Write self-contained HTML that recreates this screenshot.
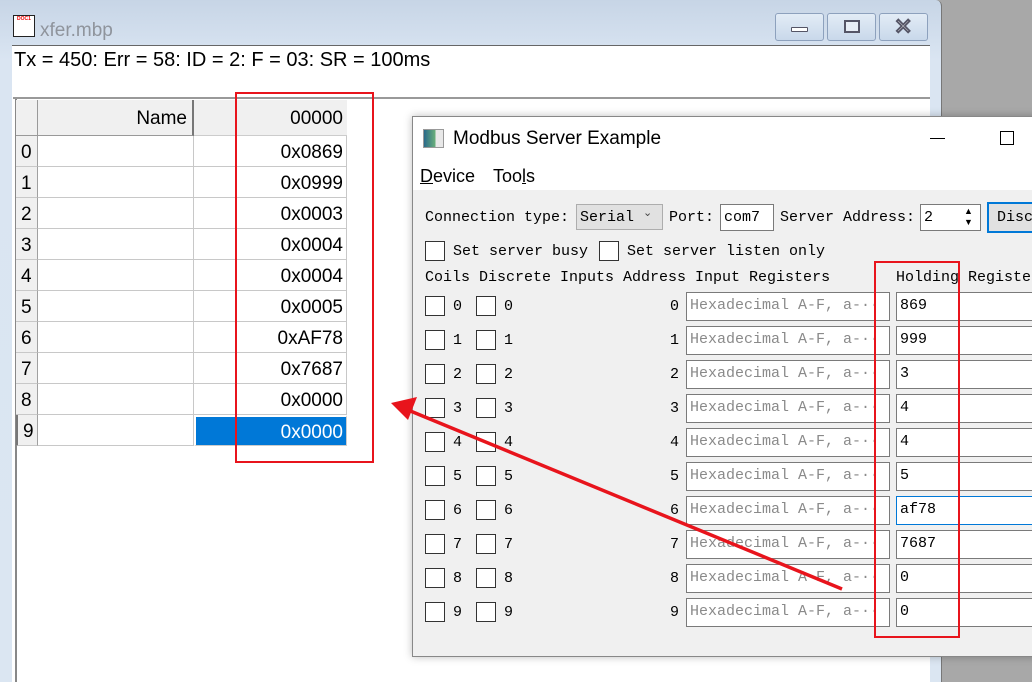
<!DOCTYPE html>
<html><head><meta charset="utf-8"><style>
*{margin:0;padding:0;box-sizing:border-box}
body{width:1032px;height:682px;overflow:hidden;position:relative;background:#a8a8a8;font-family:"Liberation Sans",sans-serif}
.a{position:absolute}
.m{font-family:"Liberation Mono","Noto Sans CJK SC",monospace;font-size:15px;color:#000;white-space:nowrap}
.cb{position:absolute;width:20px;height:20px;border:1px solid #333;background:#fff}
.in{position:absolute;height:29px;border:1px solid #7a7a7a;background:#fff;padding:4px 0 0 3px}
.gc{position:absolute;border-right:1px solid #c8c8c8;border-bottom:1px solid #c8c8c8;background:#fff;font-size:19px;text-align:right;padding:6px 3px 0 0}
.rh{position:absolute;left:16px;width:22px;background:#f0f0f0;border-bottom:1px solid #c8c8c8;border-right:1px solid #a0a0a0;font-size:19px;padding:6px 0 0 5px}
.wb{position:absolute;top:13px;width:49px;height:28px;border:1px solid #8da1bd;border-radius:3px;background:linear-gradient(#e3ecf6,#c9d8ea)}
</style></head><body>
<div class="a" style="left:0;top:0;width:942px;height:682px;background:linear-gradient(#c7d5e6,#dae5f2 60px,#dbe6f2);border-right:1px solid #777;border-top-right-radius:6px"></div>
<div class="a" style="left:13px;top:15px;width:22px;height:22px;border:1px solid #222;background:#fff"><div style="font-size:5px;color:#e00;font-weight:bold;text-align:center;line-height:6px">DOC1</div></div>
<div class="a" style="left:40px;top:20px;font-size:19px;color:#8f949c">xfer.mbp</div>
<div class="wb" style="left:775px"><div class="a" style="left:15px;top:13px;width:17px;height:5px;border:1px solid #556;background:#fff;border-radius:1px"></div></div>
<div class="wb" style="left:827px"><div class="a" style="left:16px;top:6px;width:16px;height:13px;border:2px solid #556;background:#e8eef6"></div></div>
<div class="wb" style="left:879px"><div class="a" style="left:14px;top:0;font-size:22px;font-weight:bold;color:#fff;-webkit-text-stroke:1px #556">✕</div></div>
<div class="a" style="left:12px;top:45px;width:918px;height:637px;background:#fff;border-top:1px solid #666"></div>
<div class="a" style="left:14px;top:49px;font-size:20px;color:#000">Tx = 450: Err = 58: ID = 2: F = 03: SR = 100ms</div>
<div class="a" style="left:13px;top:97px;width:917px;height:2px;background:#999"></div>
<div class="a" style="left:15px;top:99px;width:2px;height:583px;background:#888"></div>
<div class="a" style="left:16px;top:100px;width:22px;height:36px;background:#f0f0f0;border-right:1px solid #999;border-bottom:1px solid #999"></div>
<div class="a" style="left:38px;top:100px;width:156px;height:36px;background:#f0f0f0;border-right:2px solid #777;border-bottom:1px solid #999;font-size:19px;text-align:right;padding:8px 5px 0 0">Name</div>
<div class="a" style="left:194px;top:100px;width:153px;height:36px;background:#f0f0f0;border-bottom:1px solid #ccc;font-size:19px;text-align:right;padding:8px 4px 0 0">00000</div>
<div class="rh" style="top:136px;height:31px">0</div><div class="gc" style="left:38px;top:136px;width:156px;height:31px"></div><div class="gc" style="left:194px;top:136px;width:153px;height:31px">0x0869</div>
<div class="rh" style="top:167px;height:31px">1</div><div class="gc" style="left:38px;top:167px;width:156px;height:31px"></div><div class="gc" style="left:194px;top:167px;width:153px;height:31px">0x0999</div>
<div class="rh" style="top:198px;height:31px">2</div><div class="gc" style="left:38px;top:198px;width:156px;height:31px"></div><div class="gc" style="left:194px;top:198px;width:153px;height:31px">0x0003</div>
<div class="rh" style="top:229px;height:31px">3</div><div class="gc" style="left:38px;top:229px;width:156px;height:31px"></div><div class="gc" style="left:194px;top:229px;width:153px;height:31px">0x0004</div>
<div class="rh" style="top:260px;height:31px">4</div><div class="gc" style="left:38px;top:260px;width:156px;height:31px"></div><div class="gc" style="left:194px;top:260px;width:153px;height:31px">0x0004</div>
<div class="rh" style="top:291px;height:31px">5</div><div class="gc" style="left:38px;top:291px;width:156px;height:31px"></div><div class="gc" style="left:194px;top:291px;width:153px;height:31px">0x0005</div>
<div class="rh" style="top:322px;height:31px">6</div><div class="gc" style="left:38px;top:322px;width:156px;height:31px"></div><div class="gc" style="left:194px;top:322px;width:153px;height:31px">0xAF78</div>
<div class="rh" style="top:353px;height:31px">7</div><div class="gc" style="left:38px;top:353px;width:156px;height:31px"></div><div class="gc" style="left:194px;top:353px;width:153px;height:31px">0x7687</div>
<div class="rh" style="top:384px;height:31px">8</div><div class="gc" style="left:38px;top:384px;width:156px;height:31px"></div><div class="gc" style="left:194px;top:384px;width:153px;height:31px">0x0000</div>
<div class="rh" style="top:415px;height:31px;border-left:2px solid #777">9</div><div class="gc" style="left:38px;top:415px;width:156px;height:31px"></div><div class="gc" style="left:194px;top:415px;width:153px;height:31px;background:#0078d7;color:#fff;border:1px solid #ccc;border-left:2px solid #fff;border-top:2px solid #fff;padding-top:5px">0x0000</div>
<div class="a" style="left:235px;top:92px;width:139px;height:371px;border:2px solid #e8141c"></div>

<div class="a" style="left:412px;top:116px;width:630px;height:541px;background:#f0f0f0;border:1px solid #888;box-shadow:0 0 8px rgba(0,0,0,.25)"></div>
<div class="a" style="left:413px;top:117px;width:619px;height:73px;background:#fff"></div>
<div class="a" style="left:423px;top:129px;width:21px;height:19px;border:1px solid #999;background:linear-gradient(90deg,#2a6a8a,#6ab07a 60%,#e8e8e8 60%)"></div>
<div class="a" style="left:453px;top:128px;font-size:19px;color:#000">Modbus Server Example</div>
<div class="a" style="left:930px;top:138px;width:15px;height:1px;background:#000"></div>
<div class="a" style="left:1000px;top:131px;width:14px;height:14px;border:1px solid #000"></div>
<div class="a" style="left:420px;top:166px;font-size:18px"><u>D</u>evice</div>
<div class="a" style="left:493px;top:166px;font-size:18px">Too<u>l</u>s</div>

<div class="a m" style="left:425px;top:209px">Connection type:</div>
<div class="a" style="left:576px;top:204px;width:87px;height:26px;background:#e1e1e1;border:1px solid #adadad"></div>
<div class="a m" style="left:580px;top:209px">Serial</div>
<div class="a" style="left:643px;top:206px;font-size:11px;color:#444">&#8964;</div>
<div class="a m" style="left:669px;top:209px">Port:</div>
<div class="in m" style="left:720px;top:204px;width:54px;height:27px;padding-top:4px">com7</div>
<div class="a m" style="left:780px;top:209px">Server Address:</div>
<div class="in m" style="left:920px;top:204px;width:61px;height:27px;padding-top:4px">2</div>
<div class="a" style="left:964px;top:206px;font-size:9px;line-height:11px;color:#000">▲<br>▼</div>
<div class="a" style="left:987px;top:202px;width:60px;height:31px;border:2px solid #0078d7;background:#e1e1e1"></div>
<div class="a m" style="left:997px;top:209px">Disc</div>

<div class="cb" style="left:425px;top:241px"></div><div class="a m" style="left:453px;top:243px">Set server busy</div>
<div class="cb" style="left:599px;top:241px"></div><div class="a m" style="left:627px;top:243px">Set server listen only</div>
<div class="a m" style="left:425px;top:269px">Coils Discrete Inputs Address Input Registers</div>
<div class="a m" style="left:896px;top:269px">Holding Registers</div>

<div class="cb" style="left:425px;top:296px"></div><div class="a m" style="left:453px;top:298px">0</div><div class="cb" style="left:476px;top:296px"></div><div class="a m" style="left:504px;top:298px">0</div><div class="a m" style="left:670px;top:298px">0</div><div class="in m" style="left:686px;top:292px;width:204px;color:#8a8a8a">Hexadecimal A-F, a-··</div><div class="in m" style="left:896px;top:292px;width:140px">869</div>
<div class="cb" style="left:425px;top:330px"></div><div class="a m" style="left:453px;top:332px">1</div><div class="cb" style="left:476px;top:330px"></div><div class="a m" style="left:504px;top:332px">1</div><div class="a m" style="left:670px;top:332px">1</div><div class="in m" style="left:686px;top:326px;width:204px;color:#8a8a8a">Hexadecimal A-F, a-··</div><div class="in m" style="left:896px;top:326px;width:140px">999</div>
<div class="cb" style="left:425px;top:364px"></div><div class="a m" style="left:453px;top:366px">2</div><div class="cb" style="left:476px;top:364px"></div><div class="a m" style="left:504px;top:366px">2</div><div class="a m" style="left:670px;top:366px">2</div><div class="in m" style="left:686px;top:360px;width:204px;color:#8a8a8a">Hexadecimal A-F, a-··</div><div class="in m" style="left:896px;top:360px;width:140px">3</div>
<div class="cb" style="left:425px;top:398px"></div><div class="a m" style="left:453px;top:400px">3</div><div class="cb" style="left:476px;top:398px"></div><div class="a m" style="left:504px;top:400px">3</div><div class="a m" style="left:670px;top:400px">3</div><div class="in m" style="left:686px;top:394px;width:204px;color:#8a8a8a">Hexadecimal A-F, a-··</div><div class="in m" style="left:896px;top:394px;width:140px">4</div>
<div class="cb" style="left:425px;top:432px"></div><div class="a m" style="left:453px;top:434px">4</div><div class="cb" style="left:476px;top:432px"></div><div class="a m" style="left:504px;top:434px">4</div><div class="a m" style="left:670px;top:434px">4</div><div class="in m" style="left:686px;top:428px;width:204px;color:#8a8a8a">Hexadecimal A-F, a-··</div><div class="in m" style="left:896px;top:428px;width:140px">4</div>
<div class="cb" style="left:425px;top:466px"></div><div class="a m" style="left:453px;top:468px">5</div><div class="cb" style="left:476px;top:466px"></div><div class="a m" style="left:504px;top:468px">5</div><div class="a m" style="left:670px;top:468px">5</div><div class="in m" style="left:686px;top:462px;width:204px;color:#8a8a8a">Hexadecimal A-F, a-··</div><div class="in m" style="left:896px;top:462px;width:140px">5</div>
<div class="cb" style="left:425px;top:500px"></div><div class="a m" style="left:453px;top:502px">6</div><div class="cb" style="left:476px;top:500px"></div><div class="a m" style="left:504px;top:502px">6</div><div class="a m" style="left:670px;top:502px">6</div><div class="in m" style="left:686px;top:496px;width:204px;color:#8a8a8a">Hexadecimal A-F, a-··</div><div class="in m" style="left:896px;top:496px;width:140px;border-color:#0078d7">af78</div>
<div class="cb" style="left:425px;top:534px"></div><div class="a m" style="left:453px;top:536px">7</div><div class="cb" style="left:476px;top:534px"></div><div class="a m" style="left:504px;top:536px">7</div><div class="a m" style="left:670px;top:536px">7</div><div class="in m" style="left:686px;top:530px;width:204px;color:#8a8a8a">Hexadecimal A-F, a-··</div><div class="in m" style="left:896px;top:530px;width:140px">7687</div>
<div class="cb" style="left:425px;top:568px"></div><div class="a m" style="left:453px;top:570px">8</div><div class="cb" style="left:476px;top:568px"></div><div class="a m" style="left:504px;top:570px">8</div><div class="a m" style="left:670px;top:570px">8</div><div class="in m" style="left:686px;top:564px;width:204px;color:#8a8a8a">Hexadecimal A-F, a-··</div><div class="in m" style="left:896px;top:564px;width:140px">0</div>
<div class="cb" style="left:425px;top:602px"></div><div class="a m" style="left:453px;top:604px">9</div><div class="cb" style="left:476px;top:602px"></div><div class="a m" style="left:504px;top:604px">9</div><div class="a m" style="left:670px;top:604px">9</div><div class="in m" style="left:686px;top:598px;width:204px;color:#8a8a8a">Hexadecimal A-F, a-··</div><div class="in m" style="left:896px;top:598px;width:140px">0</div>

<div class="a" style="left:874px;top:261px;width:86px;height:377px;border:2px solid #e8141c"></div>
<svg class="a" style="left:0;top:0" width="1032" height="682"><line x1="842" y1="589" x2="408" y2="410" stroke="#e8141c" stroke-width="3.5"/><polygon points="391,403 417,397 408,420" fill="#e8141c"/></svg>
</body></html>
